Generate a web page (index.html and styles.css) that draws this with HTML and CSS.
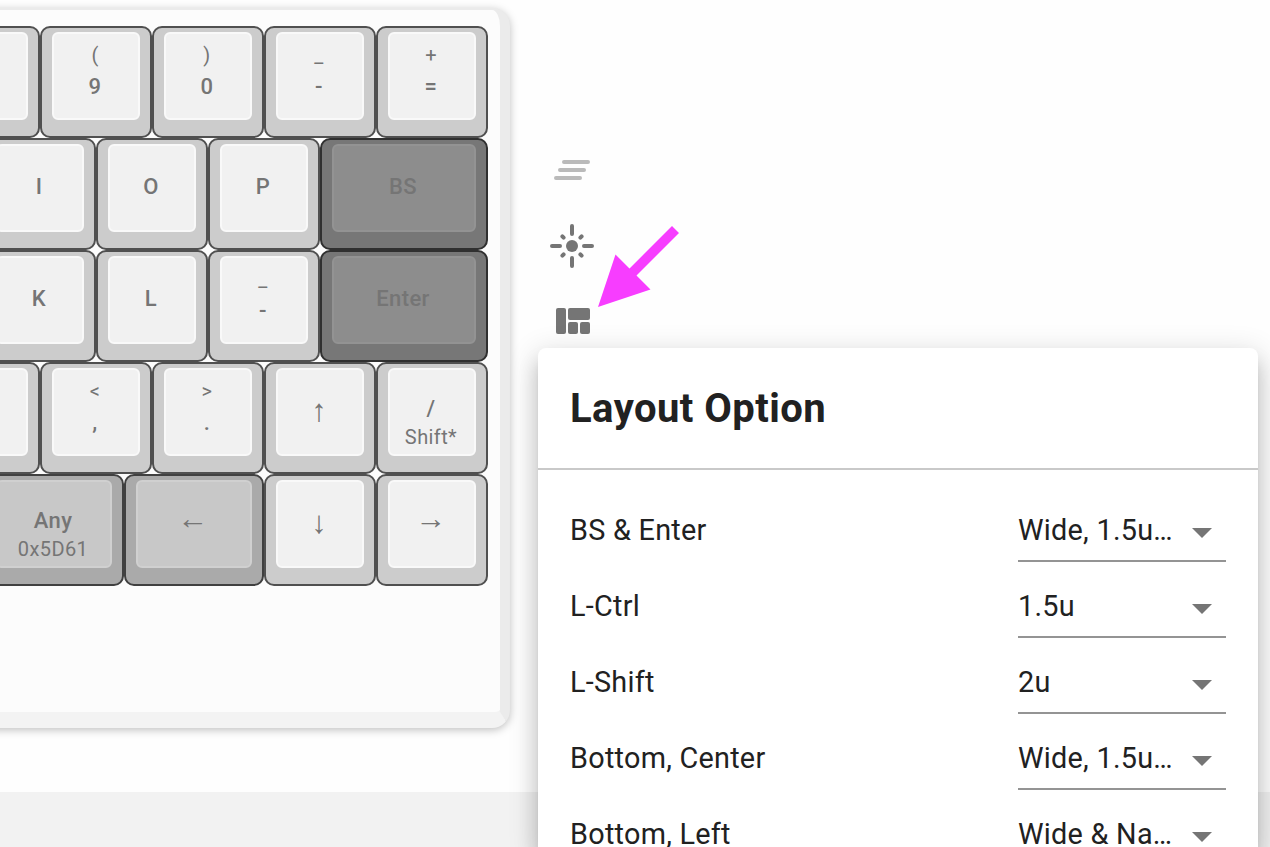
FILE: index.html
```html
<!DOCTYPE html>
<html lang="en">
<head>
<meta charset="utf-8">
<title>Layout Option</title>
<link rel="stylesheet" href="styles.css">
</head>
<body>
<main class="workspace">
  <section class="keyboard">
    <div class="row">
      <div class="key"><div class="cap"></div></div>
      <div class="key"><div class="cap"><span class="shifted">(</span><span class="legend">9</span></div></div>
      <div class="key"><div class="cap"><span class="shifted">)</span><span class="legend">0</span></div></div>
      <div class="key"><div class="cap"><span class="shifted">_</span><span class="legend">-</span></div></div>
      <div class="key"><div class="cap"><span class="shifted">+</span><span class="legend">=</span></div></div>
    </div>
    <div class="row">
      <div class="key"><div class="cap"><span class="legend">I</span></div></div>
      <div class="key"><div class="cap"><span class="legend">O</span></div></div>
      <div class="key"><div class="cap"><span class="legend">P</span></div></div>
      <div class="key wide accent"><div class="cap"><span class="legend">BS</span></div></div>
    </div>
    <div class="row">
      <div class="key"><div class="cap"><span class="legend">K</span></div></div>
      <div class="key"><div class="cap"><span class="legend">L</span></div></div>
      <div class="key"><div class="cap"><span class="shifted">_</span><span class="legend">-</span></div></div>
      <div class="key wide accent"><div class="cap"><span class="legend">Enter</span></div></div>
    </div>
    <div class="row">
      <div class="key"><div class="cap"></div></div>
      <div class="key"><div class="cap"><span class="shifted">&lt;</span><span class="legend">,</span></div></div>
      <div class="key"><div class="cap"><span class="shifted">&gt;</span><span class="legend">.</span></div></div>
      <div class="key"><div class="cap"><span class="legend arrow upright">↑</span></div></div>
      <div class="key"><div class="cap hold"><span class="legend">/</span><span class="sub">Shift*</span></div></div>
    </div>
    <div class="row">
      <div class="key mid modifier"><div class="cap hold"><span class="legend">Any</span><span class="sub">0x5D61</span></div></div>
      <div class="key mid modifier"><div class="cap"><span class="legend arrow">←</span></div></div>
      <div class="key"><div class="cap"><span class="legend arrow upright">↓</span></div></div>
      <div class="key"><div class="cap"><span class="legend arrow">→</span></div></div>
    </div>
  </section>
  <nav class="tools">
    <svg class="tool faded" viewBox="0 0 48 48"><path d="M16 10H40M12 18H36M8 26H32" stroke="currentColor" stroke-width="4" stroke-linecap="round"/></svg>
    <svg class="tool" viewBox="0 0 48 48"><circle cx="24" cy="24" r="6" fill="currentColor"/><path d="M24 4v8M24 36v8M4 24h8M36 24h8M14.4 14.4l1.2 1.2M33.6 14.4l-1.2 1.2M14.4 33.6l1.2-1.2M33.6 33.6l-1.2-1.2" stroke="currentColor" stroke-width="4" stroke-linecap="round"/></svg>
    <svg class="tool" viewBox="0 0 48 48"><rect x="8" y="10" width="10" height="26" rx="2"/><rect x="20" y="10" width="22" height="12" rx="2"/><rect x="20" y="24" width="10" height="12" rx="2"/><rect x="32" y="24" width="10" height="12" rx="2"/></svg>
  </nav>
</main>
<footer class="footer"></footer>
<section class="dialog">
  <h2 class="title">Layout Option</h2>
  <div class="options">
    <div class="option"><span>BS &amp; Enter</span><div class="select"><span>Wide, 1.5u…</span><i class="caret"></i></div></div>
    <div class="option"><span>L-Ctrl</span><div class="select"><span>1.5u</span><i class="caret"></i></div></div>
    <div class="option"><span>L-Shift</span><div class="select"><span>2u</span><i class="caret"></i></div></div>
    <div class="option"><span>Bottom, Center</span><div class="select"><span>Wide, 1.5u…</span><i class="caret"></i></div></div>
    <div class="option last"><span>Bottom, Left</span><div class="select"><span>Wide &amp; Na…</span><i class="caret"></i></div></div>
  </div>
</section>
<svg class="pointer" viewBox="0 0 82 82"><path d="M0 81L17.5 28.5L31.5 42.5L74 0L81 7L38.5 49.5L52.5 63.5Z" fill="#f73dff"/></svg>
</body>
</html>
```
FILE: styles.css
```css
* { box-sizing: border-box; }
body {
  margin: 0;
  height: 847px;
  overflow: hidden;
  position: relative;
  background: #fefefe;
  color: #212121;
  font-family: Roboto, "Noto Sans", sans-serif;
}
.workspace {
  display: flex;
  align-items: flex-start;
  height: 792px;
  padding-top: 8px;
}
.keyboard {
  width: 530px;
  height: 720px;
  margin-left: -20px;
  padding: 16px 12px 0 20px;
  background: #fcfcfc;
  border: solid;
  border-width: 2px 10px 16px 0;
  border-color: #ebebeb #ebebeb #f3f3f3;
  border-radius: 0 18px 18px 0;
  box-shadow: 0 2px 8px rgba(0, 0, 0, .25);
}
.row {
  display: flex;
  justify-content: flex-end;
  width: 488px;
  overflow: hidden;
}
.key {
  flex: none;
  width: 112px;
  height: 112px;
  padding: 4px 10px;
  border: 2px solid #505050;
  border-radius: 10px;
  background: #ccc;
}
.key.wide { width: 168px; }
.key.mid { width: 140px; }
.cap {
  height: 88px;
  padding: 8px 2px 0 0;
  display: flex;
  flex-direction: column;
  align-items: center;
  border: 2px solid #f9f9f9;
  border-radius: 6px;
  background: #f1f1f1;
  color: #757575;
  letter-spacing: .4px;
}
.modifier { background: #aaa; border-color: #404040; }
.modifier .cap { background: #c8c8c8; border-color: #d0d0d0; }
.accent { background: #777; border-color: #303030; }
.accent .cap { background: #8d8d8d; border-color: #939393; color: #757575; }
.shifted, .sub { font-size: 20px; line-height: 28px; }
.shifted { line-height: 27px; }
.legend { font-size: 22px; line-height: 34px; font-weight: 500; }
.shifted + .legend { margin-top: 1px; }
.legend:only-child { margin-top: 16px; }
.cap.hold { padding-top: 22px; }
.hold .sub { line-height: 22px; }
.legend.arrow {
  margin-top: 14px;
  font-family: "Liberation Serif", serif;
  font-size: 31px;
  font-weight: 400;
  line-height: 30px;
  letter-spacing: 0;
}
.legend.upright { margin-top: 18px; }
.tools {
  display: flex;
  flex-direction: column;
  gap: 28px;
  padding: 144px 0 0 38px;
  color: #757575;
}
.tool { width: 48px; height: 48px; fill: currentColor; }
.faded { margin-bottom: -6px; color: #bababa; }
.footer { height: 55px; background: #f2f2f2; }
.dialog {
  position: absolute;
  left: 538px;
  top: 348px;
  width: 720px;
  height: 499px;
  background: #fff;
  border-radius: 8px 8px 0 0;
  box-shadow: 0 10px 10px -6px rgba(0, 0, 0, .2), 0 16px 20px 2px rgba(0, 0, 0, .14), 0 6px 28px 4px rgba(0, 0, 0, .12);
}
.title {
  margin: 0;
  height: 122px;
  padding: 1px 32px 0;
  border-bottom: 2px solid #c9c9c9;
  font-size: 40px;
  line-height: 120px;
  font-weight: 700;
  letter-spacing: .45px;
}
.options { padding: 30px 32px 0; }
.option {
  display: flex;
  justify-content: space-between;
  height: 76px;
  font-size: 28.8px;
  line-height: 61px;
  letter-spacing: .26px;
}
.option.last { height: 43px; }
.select {
  display: flex;
  align-items: center;
  justify-content: space-between;
  width: 208px;
  height: 62px;
  padding-right: 14px;
  border-bottom: 2px solid #949494;
}
.caret {
  margin-top: 6px;
  border: solid transparent;
  border-width: 10px 10px 0;
  border-top-color: #757575;
}
.pointer {
  position: absolute;
  left: 598px;
  top: 226px;
  width: 82px;
  height: 82px;
}
```
